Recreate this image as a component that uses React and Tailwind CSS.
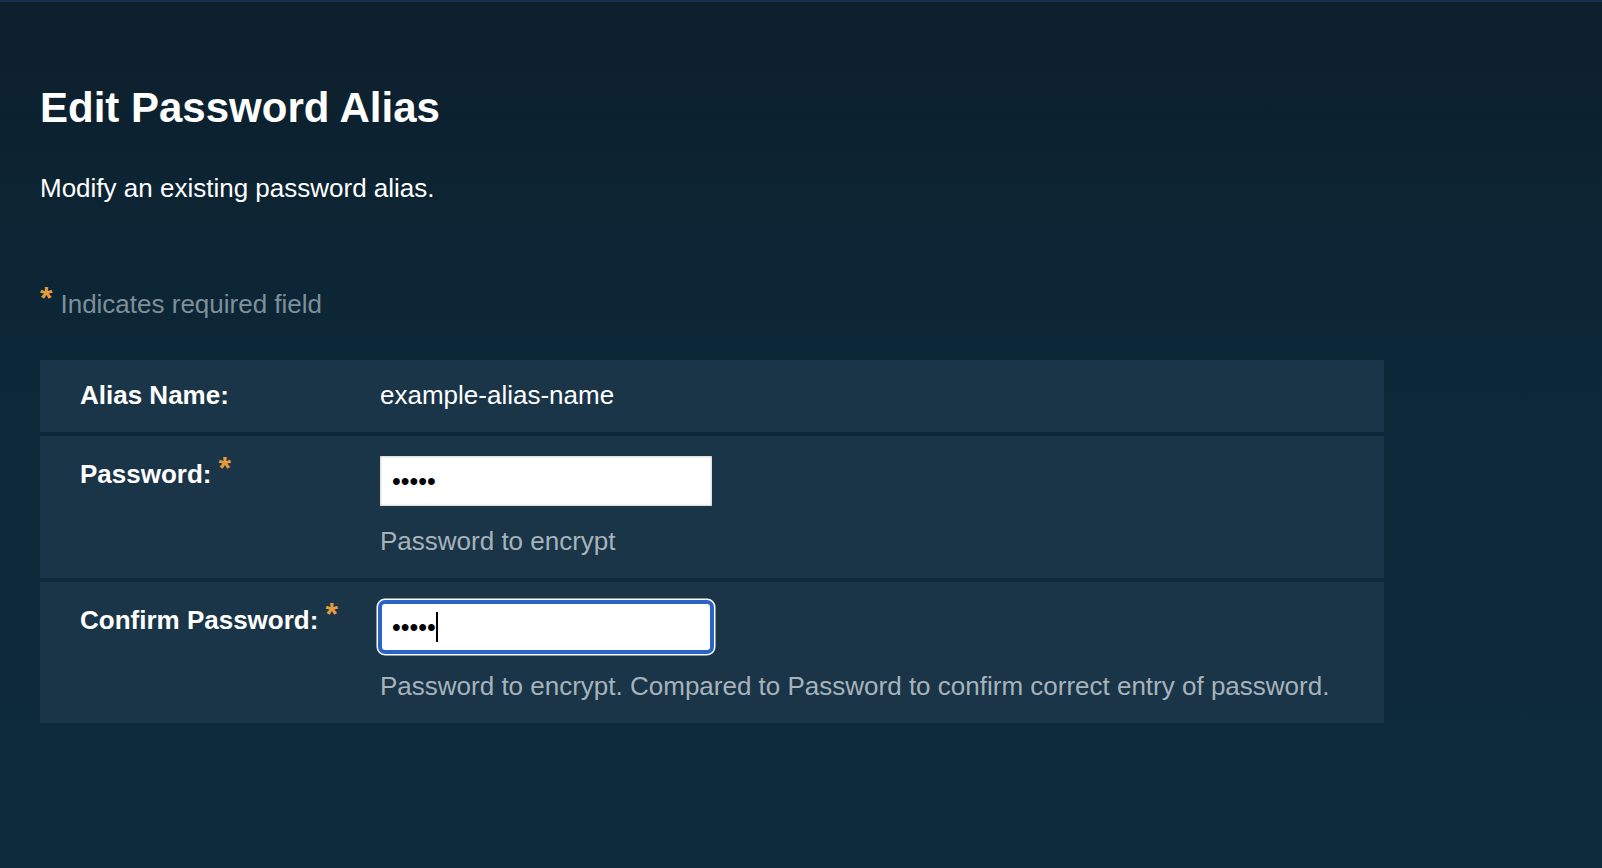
const Req = () => (
	<span className="relative top-[-4px] ml-[7px] text-[32px] font-bold leading-[0] text-[#e49b3d]">*</span>
);

const FieldRow = ( { label, required, labelPad, children } ) => (
	<div className="flex bg-[#1a3548]">
		<div
			className={ `w-[340px] shrink-0 pl-10 ${ labelPad } text-[26px] font-bold leading-[30px] text-white` }
		>
			{ label }
			{ required && <Req /> }
		</div>
		<div className="flex-1">{ children }</div>
	</div>
);

const App = () => {
	return (
		<div
			className="min-h-[868px] w-full border-t-2 border-[#14304a] bg-[linear-gradient(180deg,#0d1f2c_0%,#0c2737_40%,#0e2b3e_100%)] px-10 pt-[82px]"
			style={ { fontFamily: '"Liberation Sans", Arial, sans-serif' } }
		>
			<h1 className="text-[42px] font-bold leading-[48px] text-white">
				Edit Password Alias
			</h1>
			<p className="mt-[41px] text-[26px] leading-[30px] text-white">
				Modify an existing password alias.
			</p>
			<p className="mt-[86px] text-[26px] leading-[30px] text-[#7e8f9a]">
				<span className="relative top-[-4px] mr-[8px] text-[32px] font-bold leading-[0] text-[#e49b3d]">*</span>
				Indicates required field
			</p>

			<form className="mt-[41px] flex w-[1344px] flex-col gap-1">
				<FieldRow label="Alias Name:" labelPad="pt-[20px]">
					<div className="pt-[20px] pb-[22px] text-[26px] leading-[30px] text-white">
						example-alias-name
					</div>
				</FieldRow>

				<FieldRow label="Password:" required labelPad="pt-[23px]">
					<div className="pt-5 pb-[22px]">
						<input
							type="password"
							defaultValue="abcde"
							className="block h-[50px] w-[332px] bg-white pl-3 text-[25px] text-black outline-none shadow-[inset_0_0_3px_rgba(0,0,0,0.35)]"
							style={ { fontFamily: '"Liberation Sans", Arial, sans-serif' } }
						/>
						<div className="mt-5 text-[26px] leading-[30px] text-[#a7b3bb]">
							Password to encrypt
						</div>
					</div>
				</FieldRow>

				<FieldRow label="Confirm Password:" required labelPad="pt-[23px]">
					<div className="pt-5 pb-[22px]">
						<div className="relative w-[332px]">
							<input
								type="password"
								defaultValue="abcde"
								className="block h-[50px] w-[332px] rounded-[5px] border-2 border-[#2b63c6] bg-white pl-[10px] text-[25px] text-black caret-transparent outline-none shadow-[0_0_0_2px_#2b63c6,0_0_0_3.5px_#ffffff]"
								style={ { fontFamily: '"Liberation Sans", Arial, sans-serif' } }
							/>
							<span className="absolute left-[56px] top-[10px] h-[30px] w-[2px] bg-black" />
						</div>
						<div className="mt-[19px] text-[26px] leading-[30px] text-[#a7b3bb]">
							Password to encrypt. Compared to Password to confirm correct entry of
							password.
						</div>
					</div>
				</FieldRow>
			</form>
		</div>
	);
};

export default App;
